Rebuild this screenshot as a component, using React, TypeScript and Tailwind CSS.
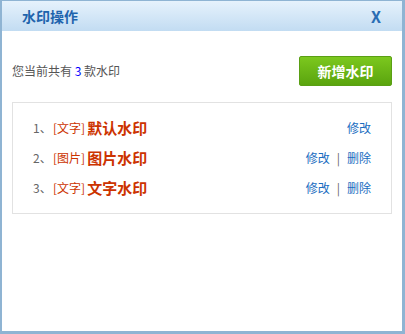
// Watermark manager dialog: header bar, count + add button, list of watermarks.

const font = { fontFamily: '"Noto Sans CJK SC", "Noto Sans", sans-serif' };

type Mark = { id: number; kind: string; name: string; deletable: boolean };

const marks: Mark[] = [
  { id: 1, kind: "文字", name: "默认水印", deletable: false },
  { id: 2, kind: "图片", name: "图片水印", deletable: true },
  { id: 3, kind: "文字", name: "文字水印", deletable: true },
];

function MarkRow({ mark }: { mark: Mark }) {
  return (
    <li className="flex h-[30px] items-center justify-between">
      <div className="flex items-center">
        <span className="w-[20px] text-[12px] text-[#666]">{mark.id}、</span>
        <span className="text-[12px] text-[#cc3300]">[{mark.kind}]</span>
        <span className="ml-[2px] text-[15px] font-bold text-[#cc3300]">{mark.name}</span>
      </div>
      <div className="flex items-center text-[12px] text-[#1a6dbf]">
        <a className="cursor-pointer">修改</a>
        {mark.deletable && (
          <>
            <span className="mx-[7px] text-[#666]">|</span>
            <a className="cursor-pointer">删除</a>
          </>
        )}
      </div>
    </li>
  );
}

export default function App() {
  return (
    <div
      style={font}
      className="flex h-[334px] w-[405px] flex-col border-t border-r-[3px] border-b-[3px] border-l-2 border-[#8fb4d3] bg-white"
    >
      <div className="flex h-[30px] shrink-0 items-center justify-between bg-gradient-to-b from-[#e6f2fc] to-[#c2dcf2] pl-[20px] pr-[21px]">
        <span className="text-[14px] font-bold text-[#1e64ad]">水印操作</span>
        <button className="text-[16px] font-bold leading-none text-[#2a6db4]">X</button>
      </div>

      <div className="flex flex-col px-[10px]">
        <div className="mt-[25px] flex items-center justify-between">
          <span className="text-[12px] text-[#555]">
            您当前共有 <span className="text-[#0000ff]">3</span> 款水印
          </span>
          <button className="h-[30px] w-[93px] rounded-[2px] border border-[#5a9f14] bg-gradient-to-b from-[#7cc81e] to-[#5aa40e] text-[14px] font-bold text-white">
            新增水印
          </button>
        </div>

        <ul className="mt-[16px] border border-[#e2e2e2] px-[20px] py-[10px]">
          {marks.map((m) => (
            <MarkRow key={m.id} mark={m} />
          ))}
        </ul>
      </div>
    </div>
  );
}
